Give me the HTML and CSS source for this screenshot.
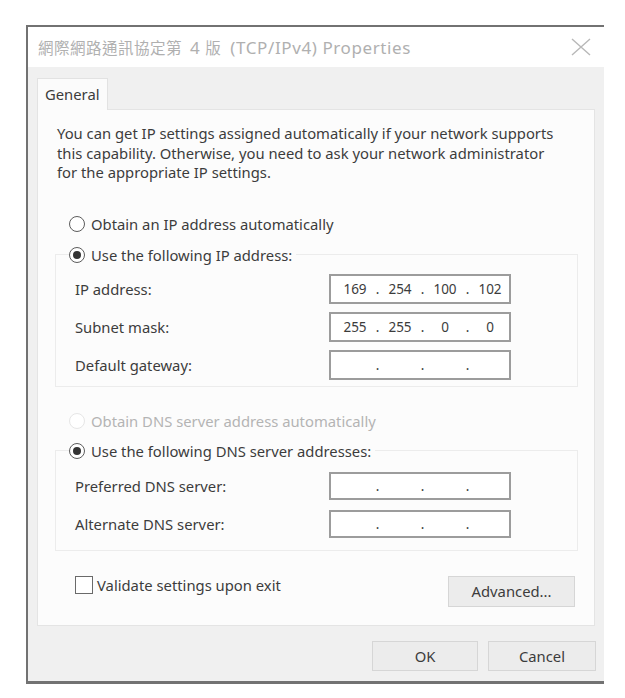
FILE: index.html
```html
<!DOCTYPE html>
<html lang="en">
<head>
    <meta charset="UTF-8">
    <title>TCP/IPv4 Properties</title>
    <link rel="stylesheet" href="styles.css">
</head>
<body>
<div class="window">
    <div class="titlebar">
        <span class="title"><span class="cjk">網際網路通訊協定第</span><span class="lat num">4</span><span class="cjk">版</span><span class="lat">(TCP/IPv4) Properties</span></span>
        <svg class="close" width="20" height="18" viewBox="0 0 20 18">
            <path d="M1 1 L19 17 M19 1 L1 17" stroke="#b8b8b8" stroke-width="1.4" fill="none"/>
        </svg>
    </div>
    <div class="content">
        <div class="tabs">
            <div class="tab">General</div>
        </div>
        <div class="panel">
            <p class="intro">You can get IP settings assigned automatically if your network supports<br>this capability. Otherwise, you need to ask your network administrator<br>for the appropriate IP settings.</p>

            <div class="option first"><span class="radio"></span>Obtain an IP address automatically</div>
            <fieldset class="group ip">
                <legend class="option"><span class="radio checked"></span>Use the following IP address:</legend>
                <div class="row">
                    <span class="label">IP address:</span>
                    <div class="ipbox"><span>169</span><i>.</i><span>254</span><i>.</i><span>100</span><i>.</i><span>102</span></div>
                </div>
                <div class="row">
                    <span class="label">Subnet mask:</span>
                    <div class="ipbox"><span>255</span><i>.</i><span>255</span><i>.</i><span>0</span><i>.</i><span>0</span></div>
                </div>
                <div class="row">
                    <span class="label">Default gateway:</span>
                    <div class="ipbox"><span></span><i>.</i><span></span><i>.</i><span></span><i>.</i><span></span></div>
                </div>
            </fieldset>

            <div class="option dns disabled"><span class="radio"></span>Obtain DNS server address automatically</div>
            <fieldset class="group dnsgroup">
                <legend class="option"><span class="radio checked"></span>Use the following DNS server addresses:</legend>
                <div class="row">
                    <span class="label">Preferred DNS server:</span>
                    <div class="ipbox"><span></span><i>.</i><span></span><i>.</i><span></span><i>.</i><span></span></div>
                </div>
                <div class="row">
                    <span class="label">Alternate DNS server:</span>
                    <div class="ipbox"><span></span><i>.</i><span></span><i>.</i><span></span><i>.</i><span></span></div>
                </div>
            </fieldset>

            <div class="bottom">
                <div class="check"><span class="box"></span>Validate settings upon exit</div>
                <button class="btn advanced">Advanced...</button>
            </div>
        </div>
        <div class="actions">
            <button class="btn ok">OK</button>
            <button class="btn cancel">Cancel</button>
        </div>
    </div>
</div>
</body>
</html>
```

FILE: styles.css
```css
* {
    padding: 0;
    margin: 0;
    box-sizing: border-box;
}

body {
    background: #fff;
    font-family: "Noto Sans", "Noto Sans CJK TC", sans-serif;
    font-size: 14.8px;
    color: #3c3c3c;
}

.window {
    margin: 25px 0 0 26px;
    width: 578px;
    border: 2px solid #727272;
    border-right: none;
    border-bottom-width: 3px;
    background: #f0f0f0;
}

.titlebar {
    height: 40px;
    background: #fff;
    display: flex;
    align-items: center;
    justify-content: space-between;
    padding: 0 13px 0 10px;
}

.title {
    color: #b0b0b0;
    display: flex;
    align-items: center;
    white-space: nowrap;
}

.title .cjk {
    font-size: 15.5px;
    letter-spacing: 0.5px;
}

.title .lat {
    font-size: 17px;
    letter-spacing: 0.6px;
    margin: 0 6px 0 9px;
}

.title .num {
    margin: 0 5px 0 8px;
}

.content {
    padding: 11px 9px 10px 9px;
}

.tabs {
    display: flex;
}

.tab {
    position: relative;
    z-index: 1;
    width: 71px;
    height: 32px;
    margin-bottom: -1px;
    padding: 5px 0 0 7px;
    background: #fbfbfb;
    border: 1px solid #e2e2e2;
    border-bottom: none;
}

.panel {
    height: 517px;
    width: 558px;
    background: #fcfcfc;
    border: 1px solid #e4e4e4;
    padding: 0 0 0 19px;
}

.intro {
    padding-top: 14px;
    line-height: 19.5px;
}

.option {
    display: flex;
    align-items: center;
    height: 20px;
    white-space: nowrap;
}

.option.first {
    margin: 31px 0 0 12px;
}

.option.dns {
    margin: 24px 0 0 12px;
}

.disabled {
    color: #b4b4b4;
}

.radio {
    width: 16px;
    height: 16px;
    border: 1.5px solid #5c5c5c;
    border-radius: 50%;
    margin-right: 6px;
    display: flex;
    align-items: center;
    justify-content: center;
    background: #fff;
}

.radio.checked::after {
    content: "";
    width: 8px;
    height: 8px;
    border-radius: 50%;
    background: #333;
}

.disabled .radio {
    border-color: #e6e6e6;
}

.group {
    width: 523px;
    margin-left: -2px;
    border: 1px solid #ececec;
    padding: 0 0 0 13px;
    min-inline-size: 0;
}

.group.ip {
    margin-top: 11px;
    padding-bottom: 6px;
}

.group.dnsgroup {
    margin-top: 10px;
    padding-bottom: 12px;
}

.group legend {
    padding-right: 4px;
}

.row {
    display: flex;
    align-items: center;
    height: 30px;
    margin-top: 8px;
    padding-left: 6px;
}

.ip .row:first-of-type {
    margin-top: 9px;
}

.dnsgroup .row {
    height: 28px;
    margin-top: 10px;
}

.dnsgroup .row:first-of-type {
    margin-top: 11px;
}

.label {
    width: 254px;
}

.ipbox {
    width: 182px;
    height: 100%;
    border: 2px solid #9c9c9c;
    background: #fff;
    display: flex;
    align-items: center;
    padding-left: 5px;
    font-size: 13.5px;
}

.ipbox span {
    width: 38px;
    text-align: center;
}

.ipbox i {
    width: 7px;
    font-style: normal;
    text-align: center;
}

.bottom {
    display: flex;
    justify-content: space-between;
    align-items: flex-start;
    margin-top: 25px;
    padding-right: 19px;
}

.check {
    display: flex;
    align-items: center;
    margin: 0 0 0 18px;
    height: 18px;
}

.box {
    width: 18px;
    height: 18px;
    border: 1.5px solid #6a6a6a;
    background: #fff;
    margin-right: 4px;
}

.btn {
    font-family: inherit;
    font-size: 14.8px;
    color: #3c3c3c;
    background: #ececec;
    border: 1px solid #d6d6d6;
}

.advanced {
    width: 127px;
    height: 31px;
}

.actions {
    display: flex;
    justify-content: flex-end;
    gap: 10px;
    margin-top: 15px;
    margin-right: -1px;
}

.ok {
    width: 106px;
    height: 30px;
}

.cancel {
    width: 108px;
    height: 30px;
}
```
